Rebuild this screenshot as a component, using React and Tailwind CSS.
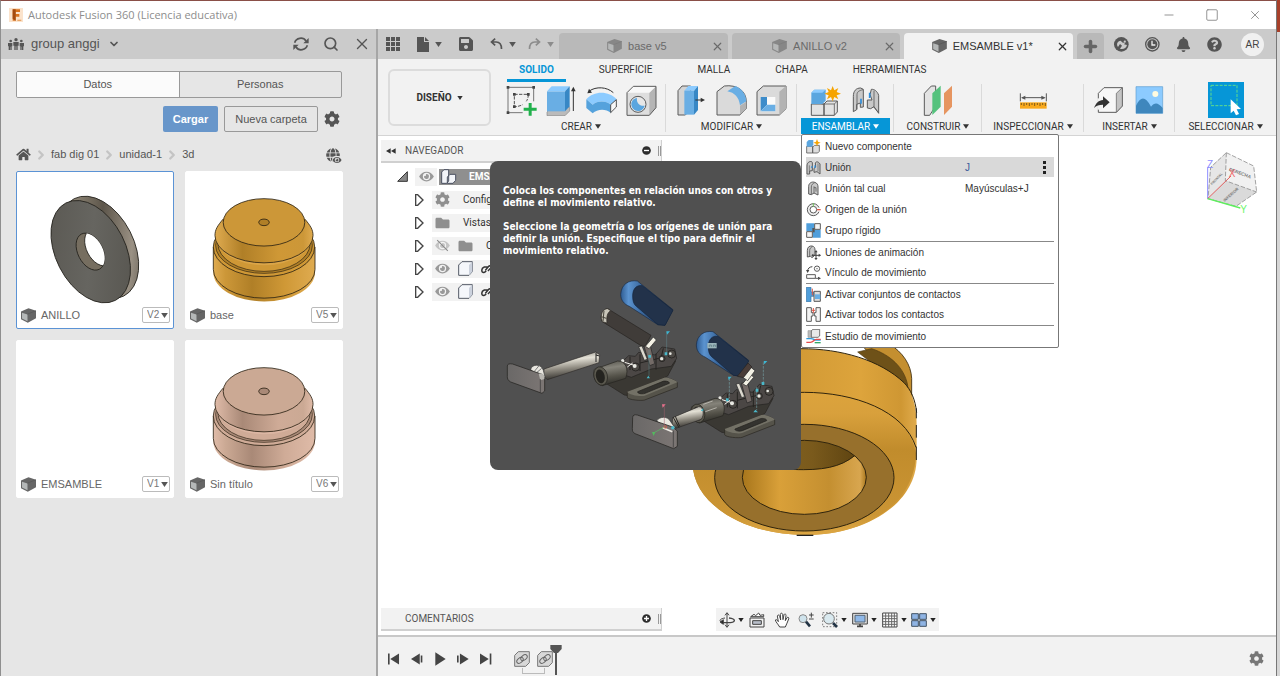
import React, { useState } from 'react';
import { X, Minus, Square, Plus, ChevronDown, ChevronRight, Search } from 'lucide-react';
import { FaCog, FaHome, FaBell, FaQuestionCircle, FaSave, FaFolder, FaEye, FaGlobe } from 'react-icons/fa';

const Caret = ({ className = 'w-[7px] h-[5px]' }) => (
    <svg viewBox="0 0 8 6" className={className} fill="currentColor" aria-hidden="true">
        <path d="M0 0h8L4 6z" />
    </svg>
);

const Cube = ({ className }) => (
    <svg viewBox="0 0 44 42" className={className} aria-hidden="true">
        <path d="M0 9 22 0l22 7v22L20 42 0 32z" fill="#666" />
        <path d="M3 13l16 5v20L3 30z" fill="#b5b8b8" />
        <path d="M19 17l25-10" stroke="#555" strokeWidth="2" />
    </svg>
);

/* ---------- Data panel ---------- */

const PART_COLORS = {
    gold: { top: '#cc9738', mid: '#cf9836', dark: '#b07f27', light: '#dfab50' },
    pink: { top: '#cba994', mid: '#cfab97', dark: '#a98977', light: '#dfbba8' },
};

function RingThumb() {
    return (
        <svg viewBox="51 20 474 474" className="w-full h-full" aria-label="ANILLO">
            <defs>
                <linearGradient id="ringSide" x1="0" y1="0" x2="1" y2="1">
                    <stop offset="0" stopColor="#6b6355" />
                    <stop offset=".25" stopColor="#8d8474" />
                    <stop offset=".5" stopColor="#5d564b" />
                    <stop offset=".78" stopColor="#9a9184" />
                    <stop offset="1" stopColor="#4a453d" />
                </linearGradient>
                <linearGradient id="ringFace" x1="0" y1="0" x2="1" y2="1">
                    <stop offset="0" stopColor="#585650" />
                    <stop offset=".5" stopColor="#666560" />
                    <stop offset="1" stopColor="#55534d" />
                </linearGradient>
                <clipPath id="ringHole">
                    <ellipse cx="274" cy="262" rx="38" ry="60" transform="rotate(-27 274 262)" />
                </clipPath>
            </defs>
            <g stroke="#26241f" strokeWidth="2.5">
                <ellipse cx="300" cy="249" rx="106" ry="166" transform="rotate(-27 300 249)" fill="url(#ringSide)" />
                <ellipse cx="275" cy="262" rx="106" ry="166" transform="rotate(-27 275 262)" fill="url(#ringFace)" />
                <ellipse cx="274" cy="262" rx="38" ry="60" transform="rotate(-27 274 262)" fill="#766e60" />
            </g>
            <g clipPath="url(#ringHole)">
                <ellipse cx="300" cy="249" rx="38" ry="60" transform="rotate(-27 300 249)" fill="#fff" stroke="#26241f" strokeWidth="2.5" />
            </g>
        </svg>
    );
}

function KnobThumb({ tone }) {
    const c = PART_COLORS[tone];
    const body = `${tone}Body`;
    const lower = `${tone}Lower`;
    return (
        <svg viewBox="556 20 474 474" className="w-full h-full" aria-hidden="true">
            <defs>
                <linearGradient id={body}>
                    <stop offset="0" stopColor={c.light} />
                    <stop offset=".28" stopColor={c.dark} />
                    <stop offset=".65" stopColor={c.mid} />
                    <stop offset=".9" stopColor={c.top} />
                    <stop offset="1" stopColor={c.light} />
                </linearGradient>
                <linearGradient id={lower}>
                    <stop offset="0" stopColor={c.light} />
                    <stop offset=".12" stopColor={c.top} />
                    <stop offset=".38" stopColor={c.dark} />
                    <stop offset=".7" stopColor={c.mid} />
                    <stop offset="1" stopColor={c.light} />
                </linearGradient>
            </defs>
            <path d="M639 248V325A154 88 0 0 0 948 325V248z" fill={`url(#${lower})`} />
            <path d="M639 248V316A154 87 0 0 0 948 316V248" fill="none" stroke="#2a2112" strokeWidth="2.5" />
            <ellipse cx="793" cy="248" rx="154" ry="90" fill={c.mid} stroke="#2a2112" strokeWidth="2.5" />
            <ellipse cx="793" cy="243" rx="147" ry="85" fill={c.dark} stroke="#2a2112" strokeWidth="2" />
            <ellipse cx="793" cy="238" rx="140" ry="84" fill={c.mid} stroke="#2a2112" strokeWidth="2" />
            <path d="M644 213A149 90 0 0 0 942 213" fill={c.light} opacity=".7" />
            <path d="M669 163C652 183 644 195 644 213A149 83 0 0 0 942 213C942 195 934 183 917 163z" fill={`url(#${body})`} />
            <path d="M669 163C652 183 644 195 644 213A149 83 0 0 0 942 213C942 195 934 183 917 163" fill="none" stroke="#2a2112" strokeWidth="2.5" />
            <ellipse cx="793" cy="173" rx="124" ry="72" fill={c.top} stroke="#2a2112" strokeWidth="2.5" />
            <ellipse cx="793" cy="173" rx="16" ry="10" fill={c.dark} stroke="#2a2112" strokeWidth="2.5" />
        </svg>
    );
}

const files = [
    { name: 'ANILLO', version: 'V2', thumb: <RingThumb />, selected: true },
    { name: 'base', version: 'V5', thumb: <KnobThumb tone="gold" /> },
    { name: 'EMSAMBLE', version: 'V1', thumb: null },
    { name: 'Sin título', version: 'V6', thumb: <KnobThumb tone="pink" /> },
];

function FileCard({ file }) {
    return (
        <article className={`relative h-[158px] bg-white border rounded-xs ${file.selected ? 'border-[#5b93d5]' : 'border-white'}`}>
            <div className="h-full">{file.thumb}</div>
            <div className="absolute inset-x-0 bottom-[3px] flex items-center pl-1 pr-[3px] h-5 text-[11px] text-[#666]">
                <Cube className="w-[15px] h-[15px] mr-[5px]" />
                <span className="flex-1">{file.name}</span>
                <span className="relative">
                    <select aria-label={`Versión de ${file.name}`} className="appearance-none block w-7 h-4 pl-1 bg-white border border-[#bbb] rounded-xs text-[10px] leading-3 text-[#777]">
                        <option>{file.version}</option>
                    </select>
                    <Caret className="absolute right-0.5 top-[6px] w-[7px] h-[5px] text-[#555] pointer-events-none" />
                </span>
            </div>
        </article>
    );
}

function DataPanel() {
    const [tab, setTab] = useState('Datos');
    return (
        <aside className="w-[377px] shrink-0 flex flex-col bg-[#e6e6e6] border-r-2 border-[#a6a6a6] text-[#555]">
            <header className="h-[30px] flex items-center pl-[7px] pr-[5px] bg-[#cbcbcb]">
                <svg viewBox="0 0 48 36" className="w-4 h-3" fill="#555" aria-hidden="true">
                    <circle cx="24" cy="5" r="5" /><circle cx="8" cy="9" r="4" /><circle cx="40" cy="9" r="4" />
                    <path d="M16 12h16v11h-3v13h-4V25h-2v11h-4V23h-3zM0 15h13v10h-2v11H7V26H6v10H2V25H0zM35 15h13v10h-2v11h-4V26h-1v10h-4V25h-2z" />
                </svg>
                <span className="ml-[7px] text-[13px]">group anggi</span>
                <ChevronDown className="ml-2 w-3 h-3" strokeWidth={3.5} />
                <div className="ml-auto flex items-center gap-3.5">
                    <button aria-label="Actualizar">
                        <svg viewBox="0 0 48 42" className="block w-4 h-3.5" fill="none" stroke="#555" strokeWidth="5">
                            <path d="M5 17C9 3 30-2 39 12M43 25C39 39 18 44 9 30" />
                            <path d="M47 3v16H31zM1 39V23h16z" fill="#555" stroke="none" />
                        </svg>
                    </button>
                    <button aria-label="Buscar"><Search className="block w-4 h-4" strokeWidth={2.5} /></button>
                    <button aria-label="Cerrar panel"><X className="block w-[18px] h-[18px]" strokeWidth={1.8} /></button>
                </div>
            </header>
            <div className="pl-[15px] pr-[33px] pt-3">
                <div role="tablist" className="flex h-[27px] mr-px border border-[#999] rounded-xs text-[11px] overflow-hidden">
                    {['Datos', 'Personas'].map((name, i) => (
                        <button
                            key={name}
                            role="tab"
                            aria-selected={tab === name}
                            onClick={() => setTab(name)}
                            className={`flex-1 ${i ? 'border-l border-[#999]' : ''} ${tab === name ? 'bg-[#fbfbfb]' : ''}`}
                        >
                            {name}
                        </button>
                    ))}
                </div>
                <div className="flex justify-end items-center gap-1.5 mt-2 mr-[3px] text-[11px]">
                    <button className="h-[26px] w-[55px] bg-[#6896ca] text-white font-bold rounded-xs">Cargar</button>
                    <button className="h-[26px] w-[94px] border border-[#999] rounded-xs">Nueva carpeta</button>
                    <button aria-label="Ajustes"><FaCog className="block w-4 h-4" /></button>
                </div>
                <nav className="flex items-center h-[39px] pt-1.5 mr-[3px] text-[11px]">
                    <a href="#inicio" aria-label="Inicio"><FaHome className="w-[15px] h-[13px]" /></a>
                    <ChevronRight className="w-4 h-3.5 mx-[2px] text-[#c4c4c4]" strokeWidth={4} />
                    <a href="#fab">fab dig 01</a>
                    <ChevronRight className="w-4 h-3.5 mx-[2px] text-[#c4c4c4]" strokeWidth={4} />
                    <a href="#unidad">unidad-1</a>
                    <ChevronRight className="w-4 h-3.5 mx-[2px] text-[#c4c4c4]" strokeWidth={4} />
                    <a href="#3d">3d</a>
                    <button aria-label="Vista web" className="relative ml-auto">
                        <FaGlobe className="block w-[14px] h-[14px]" />
                        <FaEye className="absolute -right-0.5 -bottom-0.5 w-2.5 h-2 bg-[#e6e6e6] rounded-full" />
                    </button>
                </nav>
                <div className="grid grid-cols-2 gap-[11px]">
                    {files.map(file => <FileCard key={file.name} file={file} />)}
                </div>
            </div>
        </aside>
    );
}

/* ---------- Document tabs ---------- */

const docs = [
    { name: 'base v5' },
    { name: 'ANILLO v2' },
    { name: 'EMSAMBLE v1*', active: true },
];

function DocumentBar() {
    return (
        <div className="h-[30px] flex items-center bg-[#cbcbcb] text-[#555]">
            <div className="w-[181px] shrink-0 flex items-center pl-2">
                <button aria-label="Panel de datos">
                    <svg viewBox="0 0 14 14" className="block w-3.5 h-3.5" fill="currentColor">
                        <path d="M0 0h4v4H0zM5 0h4v4H5zM10 0h4v4h-4zM0 5h4v4H0zM5 5h4v4H5zM10 5h4v4h-4zM0 10h4v4H0zM5 10h4v4H5zM10 10h4v4h-4z" />
                    </svg>
                </button>
                <button aria-label="Archivo" className="flex items-center gap-[6px] ml-[17px]">
                    <svg viewBox="0 0 12 15" className="w-3 h-[15px]" fill="currentColor"><path d="M0 0h7v5h5v10H0zM8 0l4 4H8z" /></svg>
                    <Caret />
                </button>
                <button aria-label="Guardar" className="ml-4"><FaSave className="block w-4 h-4" /></button>
                <button aria-label="Deshacer" className="flex items-center gap-[6px] ml-4">
                    <svg viewBox="0 0 38 36" className="w-[13px] h-3" fill="none" stroke="currentColor" strokeWidth="5"><path d="M15 2 4 12l11 10M4 12h14c12 0 16 8 16 21" /></svg>
                    <Caret />
                </button>
                <button aria-label="Rehacer" className="flex items-center gap-[6px] ml-3 text-[#8c8c8c]">
                    <svg viewBox="0 0 38 36" className="w-[13px] h-3" fill="none" stroke="currentColor" strokeWidth="5"><path d="M23 2l11 10-11 10M34 12H20C8 12 4 20 4 33" /></svg>
                    <Caret />
                </button>
            </div>
            <div className="flex-1 flex gap-1 self-end">
                {docs.map(doc => (
                    <div key={doc.name} className={`flex-1 h-[26px] flex items-center rounded-t-sm pl-1 pr-1 text-[11px] ${doc.active ? 'bg-[#f2f2f2] text-[#333]' : 'bg-[#b9b9b9] text-[#6a6a6a]'}`}>
                        <button className="flex-1 flex items-center justify-center gap-1.5">
                            <Cube className={doc.active ? 'w-[15px] h-[14px]' : 'w-[15px] h-[14px] opacity-60'} />
                            {doc.name}
                        </button>
                        <button aria-label={`Cerrar ${doc.name}`}><X className="w-[13px] h-[13px]" strokeWidth={2.2} /></button>
                    </div>
                ))}
                <button aria-label="Nuevo diseño" className="w-[27px] h-[26px] flex items-center justify-center bg-[#b9b9b9] rounded-t-sm">
                    <Plus className="w-[17px] h-[17px] text-[#666]" strokeWidth={5} />
                </button>
            </div>
            <div className="flex items-center gap-4 pl-2.5 pr-3">
                <button aria-label="Extensiones">
                    <svg viewBox="0 0 45 45" className="block w-[15px] h-[15px]">
                        <circle cx="22" cy="22" r="22" fill="#555" />
                        <path d="M12 30c-6-8-2-18 8-19l6 6 7-8 3 5-6 8 9 2c-2 10-12 14-21 11l6-9-6-5z" fill="#cbcbcb" />
                        <path d="M27 14l4 4" stroke="#555" strokeWidth="3" />
                    </svg>
                </button>
                <button aria-label="Estado de trabajos">
                    <svg viewBox="0 0 45 45" className="block w-[15px] h-[15px]">
                        <circle cx="22" cy="22" r="20" fill="none" stroke="#555" strokeWidth="4" />
                        <circle cx="22" cy="22" r="15" fill="#555" />
                        <path d="M21 11v13h10" fill="none" stroke="#eee" strokeWidth="4" />
                    </svg>
                </button>
                <button aria-label="Notificaciones"><FaBell className="block w-[15px] h-[15px]" /></button>
                <button aria-label="Ayuda"><FaQuestionCircle className="block w-[15px] h-[15px]" /></button>
                <button className="w-[23px] h-[23px] ml-[3px] rounded-full bg-[#f0f0f0] text-[10px] text-[#444]">AR</button>
            </div>
        </div>
    );
}

/* ---------- Ribbon ---------- */

const INK = '#5b5b5b';

const Tool = ({ label, box, className = 'block w-[31px] h-[31px]', children }) => (
    <button aria-label={label}>
        <svg viewBox={box} className={className} strokeLinejoin="round">{children}</svg>
    </button>
);

const createTools = (
    <>
        <Tool label="Crear boceto" box="388 250 93 93">
            <path d="M394 257h77v76h-77z" fill="none" stroke={INK} strokeWidth="2.5" />
            <path d="M413 278h42c0 24-18 37-42 37z" fill="none" stroke="#333" strokeWidth="2.5" strokeDasharray="10 4" />
            <path d="M390 253h8v8h-8zM467 253h8v8h-8zM390 329h8v8h-8zM409 274h8v8h-8zM451 274h8v8h-8zM409 311h8v8h-8z" fill="#444" />
            <path d="M438 299h46v46h-46z" fill="#f2f2f2" />
            <path d="M456 304h9v14h15v9h-15v15h-9v-15h-15v-9h15z" fill="#20b04b" />
        </Tool>
        <Tool label="Extruir" box="510 250 93 93">
            <path d="M513 331l14-14h54v11l-14 14h-54z" fill="#bbb" stroke="#888" strokeWidth="2" />
            <path d="M513 269h54v60h-54z" fill="#69aee4" />
            <path d="M513 269l14-15h54l-14 15z" fill="#8ccbff" />
            <path d="M567 269l14-15v60l-14 15z" fill="#3787c5" />
            <path d="M592 328v-62" stroke="#333" strokeWidth="3" />
            <path d="M592 255l7 14h-14z" fill="#333" />
        </Tool>
        <Tool label="Revolución" box="630 250 93 93">
            <path d="M640 268c20-14 52-13 72 5" fill="none" stroke="#333" strokeWidth="3" />
            <path d="M634 275l5-14 9 12z" fill="#333" />
            <path d="M631 293c22-26 68-26 91 0l-18 16c-14-13-40-13-54 0z" fill="#8ccbff" />
            <path d="M631 293l19 16c14-13 40-13 54 0v24c-14-12-40-12-54 2l-19-16z" fill="#55a2dc" />
            <path d="M704 309l17-15v22l-17 17z" fill="#f7f7f7" stroke="#333" strokeWidth="2.5" />
        </Tool>
        <Tool label="Agujero" box="751 250 93 93">
            <path d="M754 273l19-19h68v64l-20 23h-67z" fill="#dedede" />
            <path d="M821 273l20-19v64l-20 23z" fill="#b5b5b5" />
            <path d="M754 273l19-19h68l-20 19z" fill="#f8f8f8" />
            <path d="M754 273l19-19h68v64l-20 23h-67z" fill="none" stroke={INK} strokeWidth="3" />
            <circle cx="787" cy="308" r="24" fill="#e7e7e7" stroke={INK} strokeWidth="3" />
            <path d="M784 289c-10 1-17 9-17 19 0 11 9 20 20 20 10 0 18-7 20-16-14 3-26-9-23-23z" fill="#5ba6df" />
        </Tool>
    </>
);

const modifyTools = (
    <>
        <Tool label="Pulsar/Tirar" box="50 167 93 93">
            <path d="M56 184l12-14h26v70l-16 17H56z" fill="#d4d4d4" stroke={INK} strokeWidth="3" />
            <path d="M75 184l12-14h29l-12 14z" fill="#8ccbff" />
            <path d="M75 184h29v72H75z" fill="#69aee4" />
            <path d="M104 184l12-14v72l-12 14z" fill="#3787c5" />
            <path d="M108 212h18" stroke="#333" strokeWidth="3" />
            <path d="M137 212l-13 7v-14z" fill="#333" />
        </Tool>
        <Tool label="Empalme" box="172 167 93 93">
            <path d="M175 187l22-17c38-5 66 14 66 48v20l-19 19h-69z" fill="#dadada" stroke={INK} strokeWidth="3" />
            <path d="M244 229l19-12v21l-19 19z" fill="#b3b3b3" />
            <path d="M206 186l24-16c22 10 32 26 33 46l-19 12c-3-24-16-38-38-42z" fill="#69aee4" />
        </Tool>
        <Tool label="Vaciado" box="293 167 93 93">
            <path d="M296 187l19-17h68v68l-20 19h-67z" fill="#dadada" stroke={INK} strokeWidth="3" />
            <path d="M363 187l20-17v68l-20 19z" fill="#b3b3b3" />
            <path d="M307 203h44v43h-44z" fill="#fafafa" />
            <path d="M307 203h19v23l-19 20z" fill="#3d8cca" />
            <path d="M307 246l19-20h25v20z" fill="#69aee4" />
        </Tool>
    </>
);

const assembleTools = (
    <>
        <Tool label="Nuevo componente" box="452 167 93 93">
            <path d="M456 224h38v34h-38zM494 224l9-9h31v33l-9 10h-31z" fill="#e3e3e3" stroke={INK} strokeWidth="3" />
            <path d="M487 224h38v34M525 224l9-9" fill="none" stroke={INK} strokeWidth="2.5" />
            <path d="M456 190l9-9h34v33l-10 10h-33z" fill="#5ba6df" />
            <path d="M456 190l9-9h34l-10 9z" fill="#8ccbff" />
            <path d="M520 170l5 13 12-7-5 12 13 5-13 5 5 12-12-7-5 13-5-13-12 7 5-12-13-5 13-5-5-12 12 7z" fill="#f6a400" />
        </Tool>
        <Tool label="Unión" box="573 167 93 93">
            <path d="M583 247v-46c0-16 8-25 22-25l8 4v53l-9 1v-13l-11 4v16z" fill="#c9c9c9" stroke={INK} strokeWidth="3" />
            <path d="M594 240v-44c0-8 5-12 18-15" fill="none" stroke={INK} strokeWidth="2.5" />
            <path d="M659 252v-54c-4-13-14-19-22-18l-4 16 6 16-14 0v24l10 2 10-6z" fill="#c9c9c9" stroke={INK} strokeWidth="3" />
            <path d="M645 184v50l14 16" fill="none" stroke={INK} strokeWidth="2.5" />
            <path d="M606 208v15M632 190v16" stroke="#2e8ddb" strokeWidth="5" />
        </Tool>
    </>
);

const buildTools = (
    <Tool label="Plano de desfase" box="792 167 93 93">
        <path d="M796 192l21-22h13v60l-18 28h-16z" fill="#e3e3e3" stroke={INK} strokeWidth="3" />
        <path d="M820 192l25-23v63l-25 25z" fill="#55c27d" />
        <path d="M855 192l24-23v63l-24 25z" fill="#e69560" />
    </Tool>
);

const inspectTools = (
    <Tool label="Medir" box="145 250 93 93">
        <path d="M151 302h80v19h-80z" fill="#f9a91c" />
        <path d="M155 304v6M163 304v9M171 304v6M179 304v9M187 304v6M195 304v9M203 304v6M211 304v9M219 304v6M227 304v9" stroke="#7c5b1d" strokeWidth="3" />
        <path d="M152 275v24M230 275v24M158 288h66" stroke="#555" strokeWidth="3" />
        <path d="M154 288l13-6v12zM228 288l-13-6v12z" fill="#555" />
    </Tool>
);

const insertTools = (
    <>
        <Tool label="Insertar derivar" box="378 252 93 93">
            <path d="M391 277l17-17h55v55l-18 19h-54z" fill="#f7f7f7" stroke={INK} strokeWidth="3" />
            <path d="M445 277l18-17v55l-18 19z" fill="#c4c4c4" stroke={INK} strokeWidth="2" />
            <path d="M388 292h14v34h-14z" fill="#f2f2f2" />
            <path d="M378 321c6-15 14-23 27-24v-11l20 18-20 18v-11c-12 0-20 3-27 10z" fill="#333" />
        </Tool>
        <Tool label="Insertar imagen" box="495 252 93 93">
            <path d="M501 257h80v80h-80z" fill="#8ccbff" stroke="#5d9fd0" strokeWidth="2" />
            <path d="M501 314c15-30 28-28 45 3 11-14 21-13 35 4v16h-80z" fill="#3f87bd" />
            <circle cx="559" cy="279" r="9" fill="#fffbe0" />
        </Tool>
    </>
);

const selectTools = (
    <Tool label="Seleccionar" box="716 243 108 108" className="block w-9 h-9">
        <path d="M716 243h108v108H716z" fill="#0696d7" />
        <path d="M725 253h78v61h-78z" fill="none" stroke="#5fdc8c" strokeWidth="3" strokeDasharray="9 4" />
        <path d="M784 295v42l9-8 7 14 9-4-7-14 13-1z" fill="#fff" />
    </Tool>
);

const MenuIcon = ({ children }) => (
    <svg viewBox="0 0 45 45" className="w-[15px] h-[15px]" strokeLinejoin="round" aria-hidden="true">{children}</svg>
);

const menuItems = [
    {
        label: 'Nuevo componente',
        icon: <><path d="M2 22h18v20H2zM20 24l6-5h14v18l-5 5H20z" fill="#ddd" stroke={INK} strokeWidth="2.5" /><path d="M2 9l6-6h14v14l-5 6H2z" fill="#5ba6df" /><path d="M33 0l3 8 8 3-8 3-3 8-3-8-8-3 8-3z" fill="#f6a400" /></>,
    },
    {
        label: 'Unión', shortcut: 'J', active: true,
        icon: <><path d="M3 42V18C3 8 10 3 17 5l2 3v24l-8 1v9zM42 42V12c-5-8-12-8-14-3l1 12-5 4v12l9-2z" fill="#c9c9c9" stroke={INK} strokeWidth="3" /><path d="M10 38V16M36 10v24" stroke={INK} strokeWidth="2" /><path d="M16 23l3-4M27 16v8" stroke="#2e8ddb" strokeWidth="4" /></>,
    },
    {
        label: 'Unión tal cual', shortcut: 'Mayúsculas+J',
        icon: <><path d="M8 39V16C8 6 18 1 26 4c8 2 10 8 10 14v24l-12-6-8 5z" fill="#c9c9c9" stroke={INK} strokeWidth="3" /><path d="M16 40V18c0-7 4-10 10-13M24 16v20M24 20h6v12" fill="none" stroke={INK} strokeWidth="2.5" /></>,
    },
    {
        label: 'Origen de la unión',
        icon: <><circle cx="22" cy="23" r="18" fill="#eee" stroke={INK} strokeWidth="3" /><circle cx="22" cy="23" r="10" fill="#fff" stroke={INK} strokeWidth="3" /><path d="M22 14V3" stroke="#6fbf5c" strokeWidth="3" /><path d="M34 17h11v12H34z" fill="#fff" /><path d="M33 23h11" stroke="#e05545" strokeWidth="4" /></>,
    },
    {
        label: 'Grupo rígido',
        icon: <><path d="M1 1h24v24H1zM20 20h24v24H20z" fill="#4f9edb" /><path d="M26 2h17v17H26zM2 26h17v17H2z" fill="#f3f3f3" stroke={INK} strokeWidth="3" /><path d="M19 15h7v13h-7z" fill="#555" /></>,
    },
    {
        label: 'Uniones de animación', divider: true,
        icon: <><path d="M4 36V16C4 6 11 2 18 3c7 1 9 6 9 13v14l-9 8-4-4z" fill="#c9c9c9" stroke={INK} strokeWidth="3" /><path d="M11 34V17c0-7 3-9 8-12" fill="none" stroke={INK} strokeWidth="2.5" /><path d="M30 19v24M18 31h25" stroke="#444" strokeWidth="3" /><path d="M30 15l5 7H25zM30 45l5-6H25zM45 31l-7-5v10zM16 31l6-5v10z" fill="#444" /></>,
    },
    {
        label: 'Vínculo de movimiento',
        icon: <><circle cx="33" cy="11" r="8" fill="none" stroke={INK} strokeWidth="3" /><circle cx="33" cy="11" r="2" fill={INK} /><path d="M5 19C5 10 10 6 19 5" fill="none" stroke="#444" strokeWidth="3" /><path d="M5 24l-5-9h10zM45 40l-9 5V35z" fill="#444" /><path d="M2 29h26v11H2zM28 40h12" fill="#fff" stroke={INK} strokeWidth="3" /></>,
    },
    {
        label: 'Activar conjuntos de contactos', divider: true,
        icon: <><path d="M1 1h14v14h8v13h-8v16H1z" fill="#4f9edb" stroke="#2f6fa5" strokeWidth="2" /><path d="M24 13h19v30H24z" fill="#ddd" stroke={INK} strokeWidth="3" /><path d="M27 22h16v14H27z" fill="#69aee4" /><path d="M19 5v20" stroke="#e05545" strokeWidth="3" /></>,
    },
    {
        label: 'Activar todos los contactos',
        icon: <><path d="M2 2h14v15h5v10h-5v16H2zM43 2H30v15h-5v10h5v16h13z" fill="#f3f3f3" stroke={INK} strokeWidth="3" /><path d="M22 3v15M17 10h10" stroke="#e05545" strokeWidth="3" /></>,
    },
    {
        label: 'Estudio de movimiento', divider: true,
        icon: <><path d="M6 5h12v20H6z" fill="#bbb" stroke="#999" strokeWidth="2" /><path d="M16 5l5-4h20v20l-5 4H16z" fill="#e8e8e8" stroke={INK} strokeWidth="2.5" /><path d="M1 29h14c8 0 9 4 15 4h14" fill="none" stroke="#2c98d9" strokeWidth="4" /><path d="M1 40h12c10 0 10-9 18-9h13" fill="none" stroke="#e34a4a" strokeWidth="4" /><path d="M26 41h18" stroke="#35a865" strokeWidth="4" /></>,
    },
];

function AssembleMenu() {
    return (
        <ul role="menu" className="absolute z-30 left-1 top-[52px] w-[258px] px-1 py-px bg-white border border-[#777] rounded-xs font-['Liberation_Sans',Arial,sans-serif] text-[10px] text-[#333]">
            {menuItems.map(item => (
                <li key={item.label} role="none" className={item.divider ? 'h-[21px] border-t border-[#888]' : 'h-[21px]'}>
                    <button role="menuitem" className={`w-full h-5 flex items-center text-left ${item.active ? 'bg-[#d9d9d9]' : ''}`}>
                        <MenuIcon>{item.icon}</MenuIcon>
                        <span className="w-[140px] ml-1 whitespace-nowrap">{item.label}</span>
                        <span className={item.active ? 'text-[#3c5a99]' : ''}>{item.shortcut}</span>
                        {item.active && (
                            <svg viewBox="0 0 3 13" className="ml-auto mr-2 w-[3px] h-[13px]" fill="#222"><path d="M0 0h3v3H0zM0 5h3v3H0zM0 10h3v3H0z" /></svg>
                        )}
                    </button>
                </li>
            ))}
        </ul>
    );
}

const groups = [
    { label: 'CREAR', tools: createTools, width: 'w-[170px]' },
    { label: 'MODIFICAR', tools: modifyTools, width: 'w-[131px]' },
    { label: 'ENSAMBLAR', tools: assembleTools, width: 'w-[97px]', menu: true },
    { label: 'CONSTRUIR', tools: buildTools, width: 'w-[88px]' },
    { label: 'INSPECCIONAR', tools: inspectTools, width: 'w-[102px]' },
    { label: 'INSERTAR', tools: insertTools, width: 'w-[91px]' },
    { label: 'SELECCIONAR', tools: selectTools, width: 'flex-1' },
];

function Ribbon() {
    const [active, setActive] = useState('SOLIDO');
    return (
        <div className="h-[77px] flex bg-[#f2f2f2] border-b border-[#d4d4d4] font-[Roboto,sans-serif] text-[10px] text-[#333]">
            <button className="w-[103px] h-[57px] shrink-0 mt-2.5 ml-2.5 mr-[5px] flex items-center justify-center gap-[5px] border-2 border-[#dcdcdc] rounded-md font-bold">
                DISEÑO <Caret className="w-[6px] h-1" />
            </button>
            <div className="flex-1 min-w-0">
                <div role="tablist" className="flex gap-[21px] pl-[11px] h-[23px]">
                    {['SOLIDO', 'SUPERFICIE', 'MALLA', 'CHAPA', 'HERRAMIENTAS'].map(name => (
                        <button
                            key={name}
                            role="tab"
                            aria-selected={active === name}
                            onClick={() => setActive(name)}
                            className={`px-3 border-b-3 ${active === name ? 'border-[#0696d7] text-[#0696d7] font-bold' : 'border-transparent'}`}
                        >
                            {name}
                        </button>
                    ))}
                </div>
                <div className="flex h-[53px]">
                    {groups.map(group => (
                        <div key={group.label} className={`relative flex flex-col items-center shrink-0 ${group.width}`}>
                            <div className="h-9 flex items-center gap-[9px]">{group.tools}</div>
                            <button className={`h-4 flex items-center justify-center gap-[3px] ${group.menu ? 'w-[89px] bg-[#0696d7] text-white' : ''}`}>
                                {group.label} <Caret className="w-[6px] h-[5px]" />
                            </button>
                            {group.label !== 'SELECCIONAR' && <span className="absolute right-0 top-[2px] h-12 w-px bg-[#dadada]" />}
                            {group.menu && <AssembleMenu />}
                        </div>
                    ))}
                </div>
            </div>
        </div>
    );
}

/* ---------- Viewport ---------- */

function Model() {
    return (
        <svg viewBox="0 0 780 645" className="absolute left-[302px] top-[194px] w-[260px] h-[215px]" aria-label="Modelo">
            <defs>
                <linearGradient id="wall">
                    <stop offset="0" stopColor="#b98526" />
                    <stop offset=".5" stopColor="#d39b36" />
                    <stop offset=".75" stopColor="#dda43c" />
                    <stop offset=".93" stopColor="#cf9733" />
                    <stop offset="1" stopColor="#e0ab4c" />
                </linearGradient>
                <linearGradient id="round" x1="0" y1="0" x2="0" y2="1">
                    <stop offset="0" stopColor="#dca33c" />
                    <stop offset=".15" stopColor="#d8a03c" />
                    <stop offset=".4" stopColor="#c18c2c" />
                    <stop offset=".85" stopColor="#cb9534" />
                    <stop offset="1" stopColor="#dda744" />
                </linearGradient>
                <linearGradient id="bore">
                    <stop offset="0" stopColor="#a8761c" />
                    <stop offset=".3" stopColor="#d9a039" />
                    <stop offset=".7" stopColor="#c48f30" />
                    <stop offset=".95" stopColor="#d8a64f" />
                    <stop offset="1" stopColor="#a8761c" />
                </linearGradient>
                <linearGradient id="boreTop">
                    <stop offset="0" stopColor="#8b6824" />
                    <stop offset=".6" stopColor="#7a5a1c" />
                    <stop offset="1" stopColor="#5c4210" />
                </linearGradient>
                <clipPath id="boreClip"><ellipse cx="373" cy="442" rx="186" ry="111" /></clipPath>
            </defs>
            <path d="M540 40h85c45 27 68 65 70 105v60z" fill="#c48f30" stroke="#38290c" strokeWidth="2.5" />
            <path d="M575 56c55 18 98 56 108 110v30l-60-60-90-70z" fill="#6e5118" stroke="#4b370f" strokeWidth="2" />
            <path d="M38 300C60 110 190 56 363 56C480 56 600 90 672 158c26 30 38 70 38 130v98C708 520 560 615 375 615S38 520 38 400z" fill="url(#wall)" />
            <path d="M38 370C55 260 190 187 373 187S690 260 708 370C705 520 560 615 375 615S38 520 38 400z" fill="url(#round)" />
            <path d="M38 340C60 240 200 187 373 187c150 0 300 55 335 165M363 56c120 0 237 34 309 102 20 20 34 50 38 90" fill="none" stroke="#2f240d" strokeWidth="3" />
            <path d="M709 235v30M709 285v38M709 350v40" stroke="#222" strokeWidth="3" />
            <path d="M350 616h50" stroke="#222" strokeWidth="4" />
            <ellipse cx="373" cy="443" rx="269" ry="160" fill="#97702c" stroke="#2f240d" strokeWidth="3" />
            <ellipse cx="373" cy="442" rx="186" ry="111" fill="url(#bore)" />
            <g clipPath="url(#boreClip)">
                <path d="M180 320h360v42c-40 42-90 57-170 57s-135-14-190-59z" fill="url(#boreTop)" stroke="#2f240d" strokeWidth="3" />
            </g>
            <ellipse cx="373" cy="442" rx="186" ry="111" fill="none" stroke="#2f240d" strokeWidth="3" />
        </svg>
    );
}

const Flag = ({ x, y, color = '#3cb6d3' }) => <path d={`M${x} ${y}h11l-9 10z`} fill={color} />;

/* Base, levers and sleeve of the clamp, shared by both positions */
const ClampBody = () => (
    <>
        <path d="M343 352l60 38 20 3 110-60 24-45-10-10-100 40z" fill="#3a3833" stroke="#25231f" strokeWidth="2" />
        <path d="M412 382l110-43c8-3 36 7 40 14v14l-98 38c-8 3-50 0-52-8z" fill="#55534a" stroke="#28261f" strokeWidth="2" />
        <path d="M412 380l110-42c8-3 36 7 40 14l-98 40c-12 4-50-3-52-12z" fill="#737166" />
        <path d="M443 380l76-31c6-2 20 0 19 6l-73 30c-7 3-24 1-22-5z" fill="#34332f" stroke="#1f1e1b" strokeWidth="2" />
        <path d="M388 298l28-26 20 2 10-12 50 8 20-24 38 6 6 28-16 24-60 8-60 25-36-12z" fill="#4b4745" stroke="#23211f" strokeWidth="2" />
        <path d="M420 275v40M450 268v50M498 266v48M450 294l56-14M520 250l-8 34" stroke="#252321" strokeWidth="3" />
        <path d="M462 243l18-5 14 58-15 6z" fill="#746b67" stroke="#222" strokeWidth="2" />
        <path d="M446 245l10-2 16 40-9 3z" fill="#dcd9cf" stroke="#222" strokeWidth="2" />
        <path d="M466 244l24-28 9 9-22 26z" fill="#f3f1e5" stroke="#222" strokeWidth="2" />
        <g fill="#4b4844" stroke="#191816" strokeWidth="2">
            <circle cx="545" cy="267" r="12" /><circle cx="437" cy="306" r="12" /><circle cx="516" cy="281" r="9" />
        </g>
        <g fill="#e8e8e2"><circle cx="541" cy="266" r="4" /><circle cx="434" cy="303" r="6" /><circle cx="515" cy="281" r="5" /><circle cx="398" cy="287" r="5" /></g>
        <path d="M404 292l26 8M412 306l16-12" stroke="#f2f0ea" strokeWidth="3" />
        <path d="M313 313l70-25c24 0 34 24 24 52l-70 22c-22-4-30-32-24-49z" fill="url(#sleeve)" stroke="#252420" strokeWidth="2" />
        <ellipse cx="332" cy="333" rx="20" ry="28" transform="rotate(-14 332 333)" fill="#5b594f" stroke="#252420" strokeWidth="2" />
        <ellipse cx="331" cy="334" rx="13" ry="21" transform="rotate(-14 331 334)" fill="#24231f" />
    </>
);

const Handle = () => (
    <g>
        <path d="M392 88c2-30 24-44 50-40l107 86-24 47-22-2-85-55c-15-6-26-18-26-36z" fill="url(#grip)" stroke="#1a2a42" strokeWidth="2" />
        <path d="M428 93c0-22 12-34 29-31l92 74-24 45-21-2-65-55c-8-6-11-16-11-31z" fill="#22324a" stroke="#14243c" strokeWidth="2" />
    </g>
);

function ClampDrawing() {
    return (
        <svg viewBox="0 0 933 615" className="block w-full" aria-hidden="true">
            <defs>
                <linearGradient id="steel" x1="0" y1="0" x2=".2" y2="1">
                    <stop offset="0" stopColor="#7d7b75" />
                    <stop offset=".35" stopColor="#e4e1d6" />
                    <stop offset=".65" stopColor="#8f8b81" />
                    <stop offset="1" stopColor="#35332f" />
                </linearGradient>
                <linearGradient id="sleeve" x1="0" y1="0" x2=".2" y2="1">
                    <stop offset="0" stopColor="#4a4942" />
                    <stop offset=".35" stopColor="#85837a" />
                    <stop offset=".7" stopColor="#55534a" />
                    <stop offset="1" stopColor="#32312c" />
                </linearGradient>
                <linearGradient id="pad">
                    <stop offset="0" stopColor="#6a6867" />
                    <stop offset="1" stopColor="#7c7674" />
                </linearGradient>
                <linearGradient id="grip">
                    <stop offset="0" stopColor="#2f5c92" />
                    <stop offset=".15" stopColor="#5b93cf" />
                    <stop offset=".4" stopColor="#3a689e" />
                    <stop offset=".8" stopColor="#22324a" />
                </linearGradient>
            </defs>

            {/* Exploded position */}
            <path d="M162 312l155-51 12 8-2 24-155 51-12-12z" fill="url(#steel)" stroke="#2d2b28" strokeWidth="2" />
            <path d="M318 263v28M318 270l10 3" stroke="#222" strokeWidth="3" />
            <path d="M122 313c4-16 32-18 38 3l6 24-26-8z" fill="#e8e6df" stroke="#333" strokeWidth="2" />
            <path d="M134 318l14-17M141 322l14-12" stroke="#777" strokeWidth="3" />
            <path d="M52 303c0-6 6-8 16-6l88 31 8 10v40l-8 7-94-34c-9-5-10-10-10-17z" fill="url(#pad)" stroke="#2b2a28" strokeWidth="2.5" />
            <path d="M146 326c14-2 18 4 17 16l-12 4z" fill="#b9b7b1" />
            <path d="M151 342v40" stroke="#333" strokeWidth="2" />
            <path d="M353 131l130 80-18 34-12-3-116-72c-8-14-1-36 16-39z" fill="#403c39" stroke="#26231f" strokeWidth="2" />
            <path d="M353 131c-13 0-20 12-19 29l3 10 14 4c-2-17 0-31 11-37z" fill="#c9c6ba" stroke="#2d2b26" strokeWidth="2" />
            <path d="M334 155l15 5M342 137l-3 32" stroke="#454239" strokeWidth="3" />
            <ClampBody />
            <Handle />
            <path d="M530 200v66M477 255v78" stroke="#6aa4ad" strokeWidth="1" />
            <Flag x={529} y={199} />
            <path d="M524 262h8v9h-8zM475 270h8v8h-8zM470 340l5-8 5 8z" fill="#4ab8c9" />

            {/* Assembled position */}
            <g transform="translate(292 112)"><ClampBody /></g>
            <path d="M548 458l78-33c14-2 18 24 8 38l-76 27-12-10z" fill="url(#steel)" stroke="#2d2b28" strokeWidth="2" />
            <path d="M549 456l18 32M556 454l13 30" stroke="#25231f" strokeWidth="3" />
            <path d="M640 418l28-10M646 440l34-12" stroke="#d9d7cf" strokeWidth="2" />
            <path d="M500 468c7-14 34-16 42 2l14 20-20 6z" fill="#e8e6df" stroke="#333" strokeWidth="2" />
            <path d="M428 457c0-7 6-9 14-7l106 36 14 12v46l-11 7-116-45c-7-4-8-8-8-15z" fill="url(#pad)" stroke="#2b2a28" strokeWidth="2.5" />
            <path d="M550 497v51" stroke="#333" strokeWidth="2" />
            <path d="M518 488l29 12" stroke="#eeece6" strokeWidth="5" />
            <g transform="translate(227 152)"><Handle /></g>
            <path d="M742 334l32-40 12 12-25 32z" fill="#4a3d38" stroke="#222" strokeWidth="2" />
            <path d="M760 338l24-30 11 9-22 30z" fill="#f3f1e5" stroke="#222" strokeWidth="2" />
            <path d="M652 234h28v16h-28z" fill="#9bb5bb" />
            <path d="M658 246v-6h6v6M670 246v-6h6v6" fill="none" stroke="#55747d" strokeWidth="2" />
            <path d="M820 292v64M718 340v60M800 366v70" stroke="#7fb4bb" strokeWidth="1.5" strokeDasharray="8 3" />
            <Flag x={821} y={288} /><Flag x={714} y={335} />
            <path d="M815 351h8v9h-8zM708 400h8v9h-8zM797 371h8v9h-8zM790 442l6-8 8 8zM632 437l8-8v10zM544 484h9v9h-9z" fill="#4ab8c9" />
            <path d="M523 423v60" stroke="#a0606e" strokeWidth="1.5" />
            <Flag x={516} y={418} color="#e8708c" />
            <path d="M526 485l-34 18" stroke="#5bbd66" strokeWidth="2" />
            <path d="M486 501h10l-5 12z" fill="#53bb5e" />
            <circle cx="526" cy="486" r="4" fill="none" stroke="#e05545" strokeWidth="2" />
        </svg>
    );
}

function CommandTooltip() {
    return (
        <div role="tooltip" className="absolute z-20 left-[112px] top-[25px] w-[311px] pt-6 bg-[#505050] rounded-lg font-['DejaVu_Sans_Condensed','Noto_Sans',sans-serif] text-[10px] leading-3 font-bold text-white">
            <div className="px-[13px] h-20 whitespace-nowrap">
                <p>Coloca los componentes en relación unos con otros y<br />define el movimiento relativo.</p>
                <p className="mt-3">Seleccione la geometría o los orígenes de unión para<br />definir la unión. Especifique el tipo para definir el<br />movimiento relativo.</p>
            </div>
            <ClampDrawing />
        </div>
    );
}

function ViewCube() {
    return (
        <svg viewBox="705 450 165 201" className="absolute right-[16px] top-[14px] w-[55px] h-[67px]" aria-label="Cubo de vistas">
            <path d="M769 458l82 40 9 78-94-34z" fill="#f1f1f1" />
            <path d="M769 458l-49 43-6 94 52-53z" fill="#e6e6e6" />
            <path d="M766 542l94 34-62 43-84-23z" fill="#dadada" />
            <path d="M769 458l82 40 9 78-62 43-84-23 8-94zM769 458l-3 84 94 34" fill="none" stroke="#777" strokeWidth="2" strokeDasharray="14 5" />
            <g fontFamily="Liberation Sans, sans-serif" fontWeight="bold" fontSize="14" fill="#777">
                <text x="776" y="512" transform="rotate(20 776 512)">DERECHA</text>
                <text x="726" y="556" fontSize="10" transform="rotate(-46 726 556)">FRONTAL</text>
                <text x="764" y="606" fontSize="12" transform="rotate(-42 764 606)">INFERIOR</text>
            </g>
            <path d="M713 596v-94" stroke="#8d8dff" strokeWidth="3" />
            <path d="M713 596l70-68" stroke="#e05c5c" strokeWidth="3" />
            <path d="M713 596l98 28" stroke="#5cf05c" strokeWidth="4" />
            <g fontFamily="Liberation Sans, sans-serif" fontSize="30">
                <text x="711" y="504" fill="#8d8dff">Z</text>
                <text x="776" y="532" fill="#f06a6a">X</text>
                <text x="811" y="639" fill="#6cf56c">Y</text>
            </g>
        </svg>
    );
}

const Expander = () => (
    <svg viewBox="0 0 27 36" className="w-[9px] h-3 shrink-0"><path d="M2 2h6l16 16L8 34H2z" fill="#fff" stroke="#444" strokeWidth="4" /></svg>
);

const BodyIcon = () => (
    <svg viewBox="0 0 45 45" className="w-[15px] h-[15px] shrink-0"><path d="M2 12 12 2h31v30L33 43H2z" fill="#f5f7fb" stroke="#555b66" strokeWidth="3" strokeLinejoin="round" /><path d="M33 12v31L43 32V2z" fill="#ccd2dd" /></svg>
);

const LinkIcon = () => (
    <svg viewBox="0 0 30 30" className="w-[11px] h-[11px]" fill="none" stroke="#333" strokeWidth="4"><path d="M12 20 21 9c3-3 8 1 5 5l-7 8M18 11H9c-5 2-8 7-6 13 4 4 8 1 11-3" /></svg>
);

const browserRows = [
    { icon: <FaCog className="w-[15px] h-[15px] shrink-0 text-[#8f8f8f]" />, label: 'Configuración' },
    { icon: <FaFolder className="w-[15px] h-[14px] shrink-0 text-[#8f8f8f]" />, label: 'Vistas' },
    { eye: 'off', icon: <FaFolder className="w-[15px] h-[14px] shrink-0 text-[#8f8f8f]" />, label: 'Origen' },
    { eye: 'on', icon: <BodyIcon />, link: true },
    { eye: 'on', icon: <BodyIcon />, link: true },
];

const PanelHeader = ({ title, open }) => (
    <div className="w-[281px] h-[23px] shrink-0 flex items-center pl-[5px] bg-[#f2f2f2] border-r border-b-2 border-[#d0d0d0] font-[Roboto,sans-serif] text-[10px] text-[#555]">
        {open ? (
            <svg viewBox="0 0 30 16" className="w-2.5 h-[6px] mr-2" fill="#333"><path d="M14 0v16L0 8zM29 0v16L15 8z" /></svg>
        ) : <span className="w-2.5 mr-2" />}
        <span className="ml-px">{title}</span>
        <button aria-label={open ? `Contraer ${title}` : `Expandir ${title}`} className="ml-auto mr-[7px]">
            <svg viewBox="0 0 27 27" className="block w-[9px] h-[9px]"><circle cx="13.5" cy="13.5" r="13" fill="#2d2d2d" /><path d={open ? 'M6 13.5h15' : 'M6 13.5h15M13.5 6v15'} stroke="#fff" strokeWidth="4" /></svg>
        </button>
        <span className="w-[3px] h-2.5 border-x border-[#999]" />
    </div>
);

function Browser() {
    return (
        <div className="font-[Roboto,sans-serif] text-[10px] text-[#333]">
            <PanelHeader title="NAVEGADOR" open />
            <div className="flex flex-col gap-[2px] mt-[3px] w-[160px]">
                <div className="flex items-center h-[21px] pl-4">
                    <svg viewBox="0 0 33 33" className="w-[11px] h-[11px] mr-[7px] shrink-0"><path d="M31 2v29H2z" fill="#888" stroke="#333" strokeWidth="3" /></svg>
                    <span className="w-[22px] h-[18px] shrink-0 flex items-center justify-center bg-[#f2f2f2]"><FaEye className="w-[15px] h-[13px] text-[#999]" /></span>
                    <span className="ml-[2px] flex-1 h-4 flex items-center bg-[#8f8f8f] text-white font-bold">
                        <svg viewBox="0 0 48 45" className="w-4 h-[15px] ml-[2px] mr-3 shrink-0" fill="#f2f4f8" stroke="#4a5060" strokeWidth="3" strokeLinejoin="round"><path d="M2 9l7-7h14v34l-6 7H2zM19 24l8-8h17v18l-8 9H19z" /></svg>
                        EMSAMBLE
                    </span>
                </div>
                {browserRows.map((row, i) => (
                    <div key={i} className="flex items-center h-[21px] pl-[34px]">
                        <Expander />
                        <div className="flex-1 h-[18px] flex items-center ml-2 pl-[3px] bg-[#f2f2f2] whitespace-nowrap">
                            {row.eye && (
                                <span className="relative w-[15px] shrink-0 mr-[8px]">
                                    <FaEye className={row.eye === 'off' ? 'w-[15px] h-[13px] text-[#c4c4c4]' : 'w-[15px] h-[13px] text-[#999]'} />
                                    {row.eye === 'off' && <span className="absolute left-0 top-[6px] w-[15px] h-px bg-[#888] rotate-45" />}
                                </span>
                            )}
                            {row.icon}
                            {row.link && <span className="ml-2"><LinkIcon /></span>}
                            {row.label && <span className="ml-[13px]">{row.label}</span>}
                        </div>
                    </div>
                ))}
            </div>
        </div>
    );
}

const NavIcon = ({ label, caret, gap, children }) => (
    <button aria-label={label} className={`flex items-center gap-[3px] ${gap}`}>
        <svg viewBox="0 0 48 48" className="w-4 h-4" fill="none" stroke="#444" strokeWidth="3" strokeLinejoin="round">{children}</svg>
        {caret && <Caret className="w-[6px] h-1 text-[#222]" />}
    </button>
);

function NavigationBar() {
    return (
        <div className="flex items-center h-[23px] ml-[54px] px-[3px] bg-[#f2f2f2]">
            <NavIcon label="Órbita" caret gap="mr-[5px]">
                <path d="M24 3v42M18 10l6-8 6 8M18 38l6 8 6-8" /><path d="M30 18c22 2 22 14-4 14H8" strokeWidth="4" /><path d="M3 30l10-7v14z" fill="#222" /><path d="M18 18C4 20 2 24 4 28" />
            </NavIcon>
            <NavIcon label="Mirar a" gap="mr-[9px]">
                <path d="M3 18h42v27H3z" fill="#f2f2f2" /><path d="M11 26h26v11H11z" fill="#b9bfca" /><path d="M5 14l10-7 5 4 9-8 4 7 11-2v6z" fill="#fff" />
            </NavIcon>
            <NavIcon label="Encuadre" gap="mr-[8px]">
                <path d="M17 45C12 36 5 30 4 24c3-3 7 1 9 5l-3-17c2-5 6-3 7 1l3 11-1-17c1-5 6-4 7 0l1 16 3-15c2-4 6-2 6 2l-2 16 5-9c3-3 7 0 5 4-4 9-6 16-10 24z" fill="#fff" />
            </NavIcon>
            <NavIcon label="Zoom" gap="mr-[8px]">
                <circle cx="15" cy="20" r="12" fill="#cfe3ec" stroke="#888" /><path d="M24 29l12 14" strokeWidth="8" stroke="#234" /><path d="M40 2v15M33 9h14M33 21h14" />
            </NavIcon>
            <NavIcon label="Ventana de zoom" caret gap="mr-[5px]">
                <path d="M2 2h42v42H2z" strokeDasharray="5 5" strokeWidth="2" /><circle cx="21" cy="20" r="16" fill="#d9e9ef" stroke="#777" /><path d="M33 33l12 12" strokeWidth="8" stroke="#234" />
            </NavIcon>
            <NavIcon label="Visualización" caret gap="mr-[5px]">
                <path d="M2 4h44v32H2z" fill="#ddd" /><path d="M9 10h30v20H9z" fill="#8fb8e8" stroke="#567" /><path d="M15 43h18M24 36v8" strokeWidth="5" />
            </NavIcon>
            <NavIcon label="Rejilla" caret gap="mr-[4px]">
                <path d="M2 3h43v42H2z" fill="#fff" /><path d="M11 3v42M20 3v42M29 3v42M37 3v42M2 12h43M2 20h43M2 29h43M2 37h43" stroke="#666" />
            </NavIcon>
            <NavIcon label="Ventanas" caret gap="">
                <path d="M2 5h20v17H2zM26 5h20v17H26zM2 26h20v17H2zM26 26h20v17H26z" fill="#8fb4e4" stroke="#456" />
            </NavIcon>
        </div>
    );
}

function Viewport() {
    return (
        <main className="relative flex-1 flex flex-col justify-between bg-white pl-[3px] pt-1 pb-1">
            <Model />
            <Browser />
            <CommandTooltip />
            <ViewCube />
            <div className="flex items-center">
                <PanelHeader title="COMENTARIOS" />
                <NavigationBar />
            </div>
        </main>
    );
}

function Timeline() {
    const joint = (
        <svg viewBox="0 0 48 48" className="w-4 h-4" strokeLinejoin="round">
            <path d="M2 13 13 2h33v33L35 46H2z" fill="#d8d8d8" stroke="#777" strokeWidth="3" />
            <g fill="none" stroke="#666" strokeWidth="3"><ellipse cx="18" cy="28" rx="11" ry="7" transform="rotate(-40 18 28)" /><ellipse cx="30" cy="20" rx="11" ry="7" transform="rotate(-40 30 20)" /></g>
        </svg>
    );
    const controls = [
        ['Inicio', 'M0 4h5v34H0zM34 4v34L7 21z'],
        ['Paso atrás', 'M27 4v34L0 21zM30 10h5v22h-5z'],
        ['Reproducir', 'M4 0v42l32-21z'],
        ['Paso adelante', 'M0 10h5v22H0zM9 4v34l27-17z'],
        ['Final', 'M0 4v34l27-17zM30 4h5v34h-5z'],
    ];
    return (
        <footer className="h-[41px] flex items-center pl-2.5 pr-3 pt-1 bg-[#f2f2f2] border-t-2 border-[#c8c8c8] text-[#444]">
            <div className="flex gap-[11px]">
                {controls.map(([label, d]) => (
                    <button key={label} aria-label={label}><svg viewBox="0 0 37 42" className="block w-3 h-3.5" fill="currentColor"><path d={d} /></svg></button>
                ))}
            </div>
            <div className="relative flex gap-[7px] ml-[22px]">
                {joint}
                {joint}
                <span className="absolute left-2 top-[17px] w-[23px] h-[6px] border border-t-0 border-[#bbb]" />
                <svg viewBox="0 0 36 90" className="absolute left-9 -top-1.5 w-3 h-[30px]" fill="#555"><path d="M1 0h34v12L24 24h-3v66h-6V24h-3L1 12z" /></svg>
            </div>
            <button aria-label="Preferencias" className="ml-auto"><FaCog className="block w-[15px] h-[15px] text-[#777]" /></button>
        </footer>
    );
}

export default function App() {
    return (
        <div className="h-screen min-h-[600px] flex bg-[#d6d6d6] font-['Liberation_Sans',Arial,sans-serif] overflow-hidden">
            <div className="flex-1 min-w-0 flex flex-col border-t border-t-[#8a4f48] border-l border-l-[#8f8f8f]">
                <div className="h-7 shrink-0 flex items-center pl-2 pr-3.5 bg-white font-['Open_Sans',sans-serif] text-[11px] text-[#8d8d8d]">
                    <svg viewBox="0 0 42 42" className="w-3.5 h-3.5 mr-[5px]">
                        <path d="M0 0h42v42H0z" fill="#fbe3cc" />
                        <path d="M11 4h22v8H20v6h11v8H20v12h-9z" fill="#d9731f" />
                        <path d="M11 4h9v34l-9-6z" fill="#a34a10" />
                        <path d="M25 35h12v4H25z" fill="#e8a566" />
                    </svg>
                    <h1>Autodesk Fusion 360 (Licencia educativa)</h1>
                    <div className="ml-auto flex items-center gap-[29px]">
                        <button aria-label="Minimizar"><Minus className="block w-3.5 h-3.5" strokeWidth={1.6} /></button>
                        <button aria-label="Maximizar"><Square className="block w-3.5 h-3.5" strokeWidth={1.6} /></button>
                        <button aria-label="Cerrar"><X className="block w-3.5 h-3.5" strokeWidth={1.6} /></button>
                    </div>
                </div>
                <div className="flex-1 min-h-0 flex">
                    <DataPanel />
                    <div className="flex-1 min-w-0 flex flex-col">
                        <DocumentBar />
                        <Ribbon />
                        <Viewport />
                        <Timeline />
                    </div>
                </div>
            </div>
            <div className="w-1 border-l border-[#777]"><div className="h-8 bg-[#a8402a]" /></div>
        </div>
    );
}
